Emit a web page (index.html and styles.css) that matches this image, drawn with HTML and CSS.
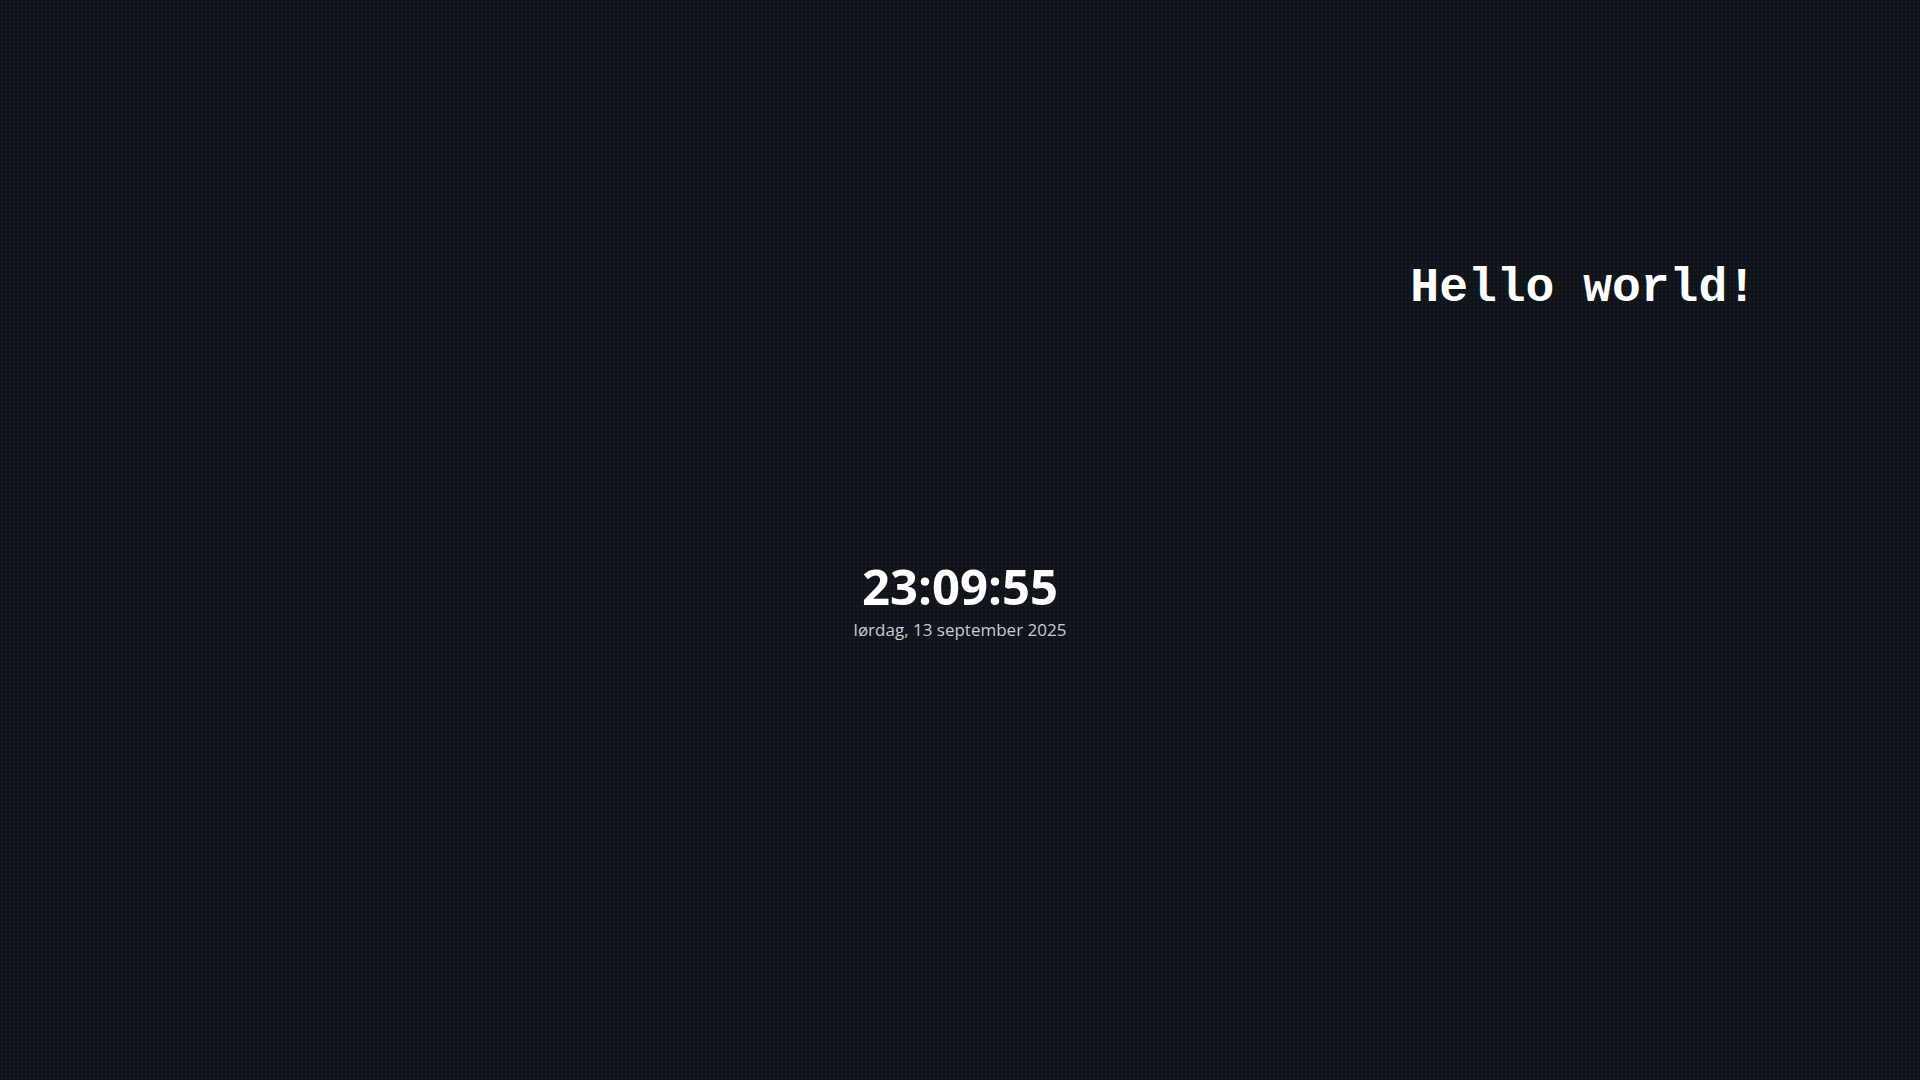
FILE: index.html
```html
<!DOCTYPE html>
<html lang="no">
<head>
<meta charset="utf-8">
<title>Dashboard</title>
<link rel="stylesheet" href="styles.css">
</head>
<body>
<div class="screen">
  <div class="top">
    <div class="hello">Hello world!</div>
  </div>
  <div class="center">
    <div class="clock">
      <div class="time">23:09:55</div>
      <div class="date">lørdag, 13 september 2025</div>
    </div>
  </div>
</div>
</body>
</html>
```
FILE: styles.css
```css
html, body {
  margin: 0;
  padding: 0;
  background-color: #10131a;
  height: 100%;
}
.screen {
  width: 1920px;
  height: 1080px;
  display: flex;
  flex-direction: column;
  box-sizing: border-box;
  background-color: #10131a;
  background-image: radial-gradient(circle, rgba(90, 115, 170, 0.07) 0.8px, transparent 1.1px);
  background-size: 4px 4px;
}
.top {
  display: flex;
  justify-content: flex-end;
  padding: 260px 164px 0 0;
}
.hello {
  font-family: "Courier New", "Nimbus Mono PS", "FreeMono", "Liberation Mono", monospace;
  font-weight: bold;
  font-size: 48px;
  line-height: 56px;
  color: #ffffff;
}
.center {
  display: flex;
  justify-content: center;
  padding-top: 241px;
}
.clock {
  display: flex;
  flex-direction: column;
  align-items: center;
  font-family: "Open Sans", "Noto Sans", sans-serif;
}
.time {
  font-size: 49px;
  font-weight: 700;
  color: #ffffff;
  line-height: 58px;
}
.date {
  margin-top: 3px;
  font-size: 17px;
  color: #c8ccd4;
  line-height: 24px;
}
```
